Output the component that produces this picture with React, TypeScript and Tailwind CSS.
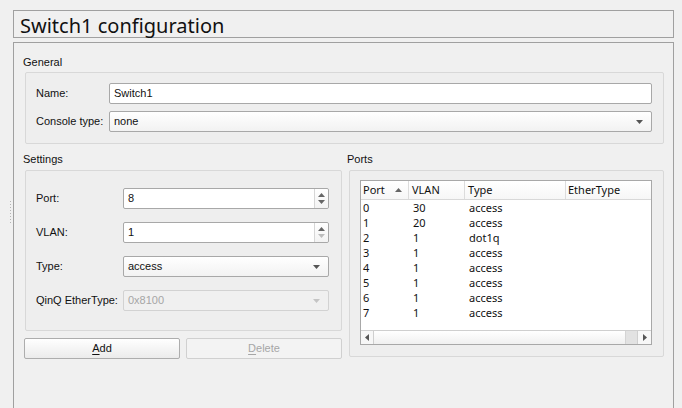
import React from 'react'

const ui = "font-['Liberation_Sans',Tahoma,sans-serif] text-[11px] text-[#111]"
const tableFont = "font-['Noto_Sans',sans-serif] text-[11px] text-[#111]"

function DownArrow({ color = '#555' }: { color?: string }) {
  return (
    <svg width="7" height="4" viewBox="0 0 7 4">
      <path d="M0 0 H7 L3.5 4 Z" fill={color} />
    </svg>
  )
}

function Combo({ value, disabled = false, className = '' }: { value: string; disabled?: boolean; className?: string }) {
  return (
    <div
      className={`flex items-center justify-between h-[21px] pl-[4px] pr-[8px] rounded-[2px] border ${
        disabled
          ? 'border-[#d2d2d2] bg-[#f0f0f0] text-[#a6a6a6]'
          : 'border-[#a8a8a8] bg-gradient-to-b from-white to-[#f2f2f2]'
      } ${className}`}
    >
      <span className="leading-none">{value}</span>
      <DownArrow color={disabled ? '#c4c4c4' : '#555'} />
    </div>
  )
}

function Spin({ value, downDisabled = false }: { value: string; downDisabled?: boolean }) {
  return (
    <div className="flex h-[21px] w-[206px] rounded-[2px] border border-[#a8a8a8] bg-white">
      <span className="flex-1 flex items-center pl-[4px] leading-none">{value}</span>
      <div className="w-[14px] border-l border-[#d6d6d6] flex flex-col items-center justify-center gap-[3px] bg-gradient-to-b from-white to-[#f3f3f3] rounded-r-[2px]">
        <svg width="7" height="4" viewBox="0 0 7 4">
          <path d="M0 4 H7 L3.5 0 Z" fill="#666" />
        </svg>
        <svg width="7" height="4" viewBox="0 0 7 4">
          <path d="M0 0 H7 L3.5 4 Z" fill={downDisabled ? '#bdbdbd' : '#666'} />
        </svg>
      </div>
    </div>
  )
}

const ports = [
  { port: 0, vlan: 30, type: 'access' },
  { port: 1, vlan: 20, type: 'access' },
  { port: 2, vlan: 1, type: 'dot1q' },
  { port: 3, vlan: 1, type: 'access' },
  { port: 4, vlan: 1, type: 'access' },
  { port: 5, vlan: 1, type: 'access' },
  { port: 6, vlan: 1, type: 'access' },
  { port: 7, vlan: 1, type: 'access' },
]

export default function App() {
  return (
    <div className={`relative w-[682px] h-[408px] overflow-hidden bg-[#f0f0f0] pt-[10px] pl-[13px] pr-[8px] flex flex-col ${ui}`}>
      {/* splitter handle dots */}
      <div className="absolute left-[10px] top-[201px] flex flex-col gap-[2px]">
        {Array.from({ length: 8 }).map((_, i) => (
          <div key={i} className="w-[1px] h-[1px] bg-[#b4b4b4]" />
        ))}
      </div>

      <div className="h-[28px] border border-[#a0a0a0] flex items-center pl-[6px]">
        <span className="font-['Noto_Sans',sans-serif] text-[20px] leading-none text-[#111] mt-[3px]">
          Switch1 configuration
        </span>
      </div>

      <div className="mt-[4px] flex-1 border-l border-t border-r border-[#a0a0a0] pl-[11px] pr-[9px] pt-[12px]">
        <div className="h-[14px] leading-[14px] -ml-[2px]">General</div>
        <div className="mt-[3px] h-[72px] border border-[#d8d8d8] rounded-[2px] bg-[#eeeeee] pl-[10px] pr-[11px] pt-[10px]">
          <div className="flex items-center">
            <span className="w-[73px]">Name:</span>
            <div className="flex-1 h-[21px] border border-[#a8a8a8] rounded-[2px] bg-white flex items-center pl-[4px]">
              Switch1
            </div>
          </div>
          <div className="flex items-center mt-[7px]">
            <span className="w-[73px]">Console type:</span>
            <Combo value="none" className="flex-1" />
          </div>
        </div>

        <div className="mt-[8px] flex gap-[5px]">
          <div className="w-[317px] flex flex-col">
            <div className="h-[14px] leading-[14px] -ml-[2px]">Settings</div>
            <div className="mt-[4px] h-[161px] border border-[#d8d8d8] rounded-[2px] bg-[#eeeeee] pl-[10px]">
              <div className="flex items-center mt-[17px]">
                <span className="w-[87px]">Port:</span>
                <Spin value="8" />
              </div>
              <div className="flex items-center mt-[13px]">
                <span className="w-[87px]">VLAN:</span>
                <Spin value="1" downDisabled />
              </div>
              <div className="flex items-center mt-[13px]">
                <span className="w-[87px]">Type:</span>
                <Combo value="access" className="w-[206px]" />
              </div>
              <div className="flex items-center mt-[13px]">
                <span className="w-[87px]">QinQ EtherType:</span>
                <Combo value="0x8100" disabled className="w-[206px]" />
              </div>
            </div>
            <div className="mt-[7px] -ml-[1px] flex gap-[6px]">
              <button className="w-[156px] h-[21px] rounded-[2px] border border-[#adadad] bg-gradient-to-b from-white to-[#ebebeb] flex items-center justify-center">
                <span>
                  <span className="underline underline-offset-2">A</span>dd
                </span>
              </button>
              <button className="w-[156px] h-[21px] rounded-[2px] border border-[#d0d0d0] bg-[#f3f3f3] text-[#a6a6a6] flex items-center justify-center">
                <span>
                  <span className="underline underline-offset-2">D</span>elete
                </span>
              </button>
            </div>
          </div>

          <div className="w-[317px] flex flex-col">
            <div className="h-[14px] leading-[14px]">Ports</div>
            <div className="mt-[4px] ml-[2px] h-[187px] border border-[#d8d8d8] rounded-[2px] bg-[#eeeeee] pl-[10px] pt-[9px]">
              <div className={`w-[292px] h-[165px] border border-[#a8a8a8] bg-white flex flex-col ${tableFont}`}>
                <div className="h-[19px] flex border-b border-[#d8d8d8] bg-gradient-to-b from-white to-[#f6f6f6]">
                  <div className="w-[48px] border-r border-[#dcdcdc] flex items-center justify-between pl-[2px] pr-[6px]">
                    <span>Port</span>
                    <svg width="7" height="4" viewBox="0 0 7 4">
                      <path d="M0 4 H7 L3.5 0 Z" fill="#666" />
                    </svg>
                  </div>
                  <div className="w-[56px] border-r border-[#dcdcdc] flex items-center pl-[3px]">VLAN</div>
                  <div className="w-[101px] border-r border-[#dcdcdc] flex items-center pl-[3px]">Type</div>
                  <div className="flex-1 flex items-center pl-[2px]">EtherType</div>
                </div>
                {ports.map((p) => (
                  <div key={p.port} className="h-[15px] flex items-center leading-none">
                    <span className="w-[48px] pl-[2px]">{p.port}</span>
                    <span className="w-[56px] pl-[4px]">{p.vlan}</span>
                    <span className="w-[101px] pl-[4px]">{p.type}</span>
                  </div>
                ))}
                <div className="flex-1" />
                <div className="h-[14px] border-t border-[#cfcfcf] flex">
                  <div className="w-[13px] border-r border-[#cfcfcf] flex items-center justify-center bg-[#f7f7f7]">
                    <svg width="4" height="7" viewBox="0 0 4 7">
                      <path d="M4 0 V7 L0 3.5 Z" fill="#555" />
                    </svg>
                  </div>
                  <div className="flex-1 bg-gradient-to-b from-white to-[#f0f0f0]" />
                  <div className="w-[12px] border-l border-[#d4d4d4] bg-[#e2e2e2]" />
                  <div className="w-[14px] border-l border-[#cfcfcf] flex items-center justify-center bg-[#f7f7f7]">
                    <svg width="4" height="7" viewBox="0 0 4 7">
                      <path d="M0 0 V7 L4 3.5 Z" fill="#555" />
                    </svg>
                  </div>
                </div>
              </div>
            </div>
          </div>
        </div>
      </div>
    </div>
  )
}
